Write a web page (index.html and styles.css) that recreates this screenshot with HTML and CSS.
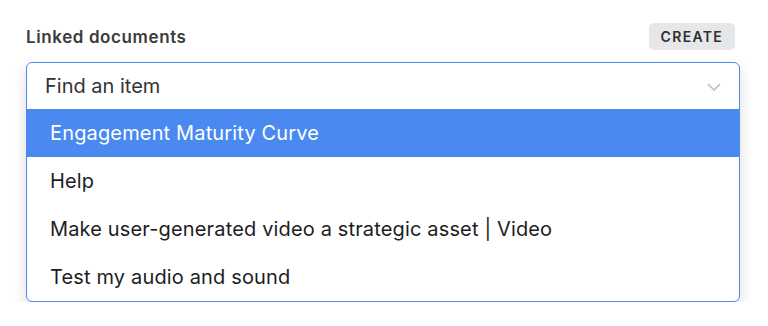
FILE: index.html
```html
<!DOCTYPE html>
<html lang="en">
<head>
    <meta charset="UTF-8">
    <title>Linked documents</title>
    <link rel="stylesheet" href="styles.css">
</head>
<body>
    <div class="field">
        <div class="field-header">
            <label class="field-label">Linked documents</label>
            <button class="create-btn">CREATE</button>
        </div>

        <div class="select">
            <div class="select-input">
                <span class="placeholder">Find an item</span>
                <svg class="chevron" width="14" height="8" viewBox="0 0 14 8">
                    <path d="M1 1l6 6 6-6" fill="none" stroke="#b8bcc4" stroke-width="1.5"/>
                </svg>
            </div>
            <ul class="options">
                <li class="option active">Engagement Maturity Curve</li>
                <li class="option">Help</li>
                <li class="option">Make user-generated video a strategic asset | Video</li>
                <li class="option">Test my audio and sound</li>
            </ul>
        </div>
    </div>
</body>
</html>
```

FILE: styles.css
```css
body {
    margin: 0;
    padding: 23px 28px 0 26px;
    background-color: #fff;
    font-family: Inter, "Noto Sans", sans-serif;
    color: #222;
}
.field {
    width: 714px;
}
.field-header {
    display: flex;
    align-items: center;
    justify-content: space-between;
    margin-right: 5px;
    margin-bottom: 12px;
}
.field-label {
    font-size: 17px;
    font-weight: 600;
    letter-spacing: 0.6px;
    color: #3a3b3e;
}
.create-btn {
    height: 27px;
    padding: 0 12px;
    border: none;
    border-radius: 5px;
    background-color: #e6e7e9;
    color: #2e3033;
    font-family: inherit;
    font-size: 14px;
    font-weight: 600;
    letter-spacing: 1.3px;
}
.select {
    border: 1px solid #4a8af4;
    border-radius: 6px;
    box-shadow: 0 6px 14px rgba(0, 0, 0, 0.14);
    overflow: hidden;
}
.select-input {
    display: flex;
    align-items: center;
    justify-content: space-between;
    height: 46px;
    padding: 0 18px 0 18px;
}
.placeholder {
    font-size: 20px;
    color: #333;
}
.chevron {
    margin-top: 1px;
}
.options {
    list-style: none;
    margin: 0;
    padding: 0;
}
.option {
    height: 48px;
    line-height: 48px;
    padding-left: 23px;
    font-size: 20px;
    letter-spacing: 0.15px;
    color: #1d1d1f;
}
.option.active {
    background-color: #4a89ef;
    color: #fff;
}
```
